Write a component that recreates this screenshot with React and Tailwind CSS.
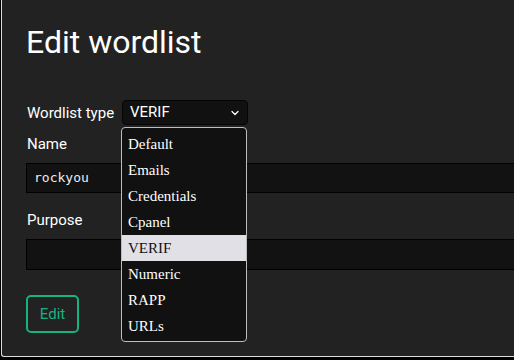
import { ChevronDown } from "lucide-react";

const types = ["Default", "Emails", "Credentials", "Cpanel", "VERIF", "Numeric", "RAPP", "URLs"];

export default function App() {
  const selected = "VERIF";

  return (
    <div className="w-[514px] h-[360px] overflow-hidden bg-black font-['Roboto',sans-serif] text-white">
      <div className="pl-px">
        <div className="w-[600px] h-[357px] bg-[#222222] border-l border-b border-[#dcdcdc] rounded-bl-[3px] pl-[24px]">
          <div className="pt-[23px]">
            <h1 className="h-[38px] leading-[38px] text-[32px] font-normal text-white">Edit wordlist</h1>
          </div>

          {/* Wordlist type */}
          <div className="mt-[39px] h-[25px] flex items-center">
            <label className="text-[15px] leading-[22px] w-[96px] pl-px">Wordlist type</label>
            <div className="relative">
              <div className="w-[126px] h-[25px] bg-[#111111] border border-[#050505] rounded-[4px] flex items-center justify-between pl-[7px] pr-[6px]">
                <span className="text-[15px] leading-none">{selected}</span>
                <ChevronDown className="w-[12px] h-[12px]" strokeWidth={2.5} />
              </div>
              <ul className="absolute left-[-1px] top-[27px] z-10 w-[126px] bg-[#111111] border border-[#bdbdbd] rounded-[4px] pt-[3px] pb-[2px] font-['Liberation_Serif',serif] text-[15px]">
                {types.map((t) => (
                  <li
                    key={t}
                    className={
                      "h-[26px] leading-[26px] pl-[6px] " +
                      (t === selected ? "bg-[#e1e0e6] text-[#111111]" : "text-white")
                    }
                  >
                    {t}
                  </li>
                ))}
              </ul>
            </div>
          </div>

          {/* Name */}
          <div className="mt-[8px] text-[15px] leading-[22px] pl-px">Name</div>
          <div className="mt-[8px] h-[30px] bg-[#121212] border border-black flex items-center pl-[7px] font-['DejaVu_Sans_Mono',monospace] text-[13px] text-[#eeeeee]">
            rockyou
          </div>

          {/* Purpose */}
          <div className="mt-[16px] text-[15px] leading-[22px] pl-px">Purpose</div>
          <div className="mt-[8px] h-[31px] bg-[#121212] border border-black"></div>

          <button className="mt-[25px] w-[53px] h-[38px] border-2 border-[#16b382] rounded-[5px] text-[#16b382] text-[15px] flex items-center justify-center">
            Edit
          </button>
        </div>
      </div>
    </div>
  );
}
